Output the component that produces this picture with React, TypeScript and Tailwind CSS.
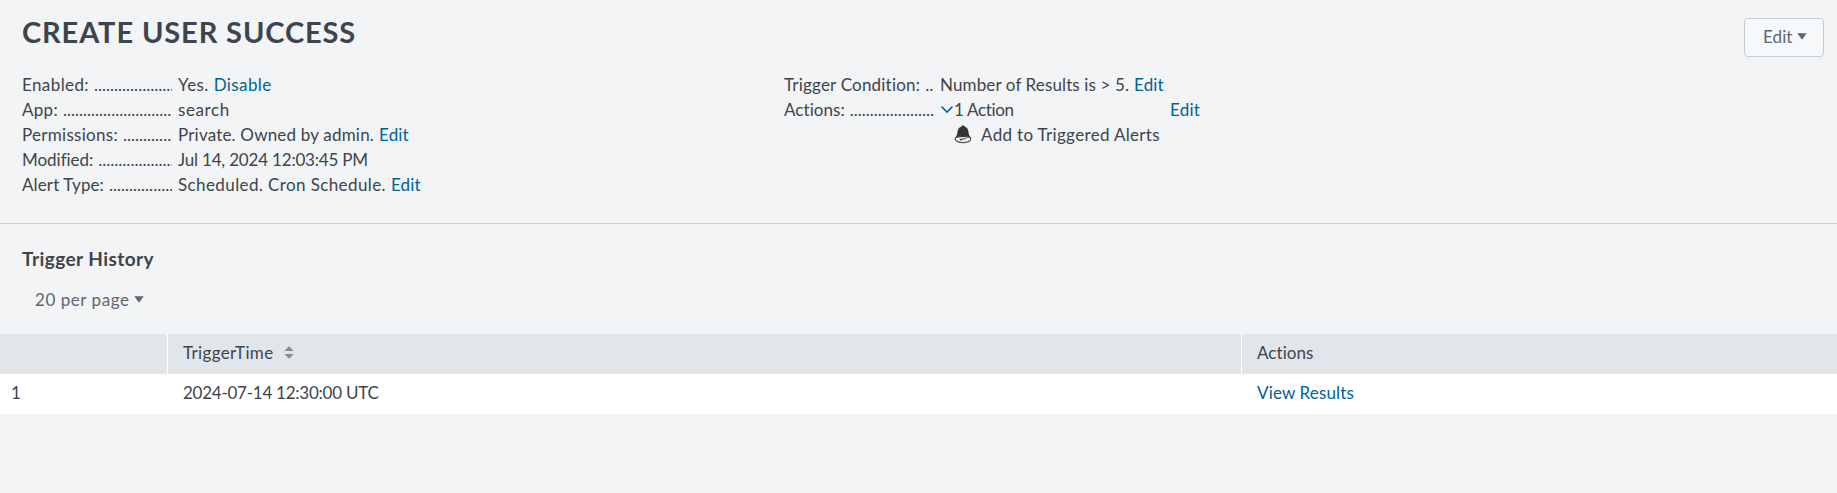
import type { ReactNode } from "react";

function Row({ label, dots, track, children }: { label: string; dots: number; track: string; children: ReactNode }) {
  return (
    <div className="flex h-[25px] whitespace-nowrap leading-[25px]">
      <dt className="mr-[6px] flex w-[150px] shrink-0 gap-[5px] overflow-hidden">
        <span className={track}>{label}</span>
        <span>{".".repeat(dots)}</span>
      </dt>
      <dd className="flex gap-[5px]">{children}</dd>
    </div>
  );
}

function Link({ children, className = "tracking-[0.15px]" }: { children: ReactNode; className?: string }) {
  return (
    <a href="#" className={`text-[#006297] ${className}`}>
      {children}
    </a>
  );
}

function Caret() {
  return (
    <svg width="10" height="7" viewBox="0 0 10 7" className="shrink-0 fill-[#5c6773]">
      <path d="M.3 .2h9.400L5.600 6q-.6.7-1.200 0z" />
    </svg>
  );
}

function Bell() {
  return (
    <svg width="18" height="19" viewBox="0 0 18 19" className="shrink-0">
      <ellipse cx="9" cy="14" rx="7.800" ry="3.700" fill="#f2f4f5" stroke="#555" strokeWidth="1.200" />
      <path d="M9 .5c1.100 0 1.700.5 1.800 1.300 2.500.8 3.500 2.600 3.700 5.200.1 2.400.9 4 2.300 5.600-2-1.300-4.700-1.900-7.800-1.900s-5.800.6-7.800 1.900C2.600 11 3.400 9.400 3.500 7c.2-2.600 1.200-4.400 3.700-5.200C7.300 1 7.900.5 9 .5z" fill="#333" />
      <path d="M2 12.300q7-3 14 0L14 12.800q-5-1.500-10 0z" fill="#333" />
      <path d="M5 14.300q3.500-1.600 8-.8-1 1.200-4.200 1.100-.8 1.300-2.300.9-1.100-.3-.6-1.200z" fill="#555" />
    </svg>
  );
}

export default function App() {
  return (
    <main className="h-[493px] w-full bg-[#f2f4f5] font-['Lato',sans-serif] text-[17px] text-[#3c444d]">
      <header className="flex h-[72px] items-start justify-between pl-[22px] pr-[13px]">
        <h1 className="pt-[14px] text-[29px] font-bold leading-9 tracking-[0.88px]">CREATE USER SUCCESS</h1>
        <button className="mt-[18px] flex h-[39px] w-20 items-center gap-1 rounded-[4px] border border-[#c3cbd4] bg-[#f7f8fa] pb-[2px] pl-[18px] text-[#5c6773]">
          <span className="tracking-[0.1px]">Edit</span>
          <Caret />
        </button>
      </header>

      <section className="flex h-[151px] pl-[22px]">
        <dl className="w-[762px]">
          <Row label="Enabled:" dots={20} track="tracking-[0.4px]">
            <span className="tracking-[0.4px]">Yes.</span>
            <Link className="tracking-[0.4px]">Disable</Link>
          </Row>
          <Row label="App:" dots={27} track="tracking-[0.3px]">
            <span className="tracking-[0.6px]">search</span>
          </Row>
          <Row label="Permissions:" dots={12} track="tracking-[0.29px]">
            <span className="tracking-[0.19px]">Private. Owned by admin.</span>
            <Link>Edit</Link>
          </Row>
          <Row label="Modified:" dots={19} track="tracking-[-0.03px]">
            <span className="tracking-[-0.19px]">Jul 14, 2024 12:03:45 PM</span>
          </Row>
          <Row label="Alert Type:" dots={16} track="tracking-[0.12px]">
            <span className="tracking-[0.4px]">Scheduled. Cron Schedule.</span>
            <Link>Edit</Link>
          </Row>
        </dl>
        <dl>
          <Row label="Trigger Condition:" dots={2} track="tracking-[0.2px]">
            <span className="tracking-[0.12px]">Number of Results is &gt; 5.</span>
            <Link>Edit</Link>
          </Row>
          <Row label="Actions:" dots={21} track="tracking-[0.05px]">
            <div className="flex w-[225px] items-center">
              <svg width="14" height="9" viewBox="0 0 14 9" className="fill-none stroke-[#006297] stroke-[1.600]">
                <path d="M1.500 1.500 7 7l5.500-5.500" />
              </svg>
              <span className="tracking-[-0.33px]">1 Action</span>
            </div>
            <Link className="tracking-[0.2px]">Edit</Link>
          </Row>
          <div className="flex h-[25px] items-center gap-[9px] pl-[170px] leading-[25px]">
            <Bell />
            <span className="tracking-[0.33px]">Add to Triggered Alerts</span>
          </div>
        </dl>
      </section>

      <section className="border-t border-[#c3cbd4]">
        <h2 className="pl-[22px] pt-[22px] text-[19px] font-bold leading-[25px] tracking-[0.44px]">Trigger History</h2>
        <div className="mt-4 flex h-[25px] items-center gap-[5px] pl-[35px] text-[#5c6773]">
          <span className="tracking-[0.55px]">20 per page</span>
          <Caret />
        </div>
        <table className="mt-[22px] w-full table-fixed border-collapse text-left">
          <colgroup>
            <col className="w-[168px]" />
            <col className="w-[1074px]" />
            <col />
          </colgroup>
          <thead>
            <tr className="h-10 bg-[#e1e6eb]">
              <th className="p-0 shadow-[inset_-1px_0_#fff]" />
              <th className="p-0 pb-[3px] pl-[15px] font-normal shadow-[inset_-1px_0_#fff]">
                <div className="flex items-center gap-[10px]">
                  <span className="tracking-[0.35px]">TriggerTime</span>
                  <svg width="10" height="13" viewBox="0 0 10 13" className="fill-[#818d99]">
                    <path d="M5 .3 9.700 5H.3zM5 12.700.3 8h9.400z" />
                  </svg>
                </div>
              </th>
              <th className="p-0 pb-[3px] pl-[15px] font-normal tracking-[0.05px]">Actions</th>
            </tr>
          </thead>
          <tbody>
            <tr className="h-10 bg-white">
              <td className="p-0 pb-[3px] pl-[11px]">1</td>
              <td className="p-0 pb-[3px] pl-[15px] tracking-[-0.25px]">2024-07-14 12:30:00 UTC</td>
              <td className="p-0 pb-[3px] pl-[15px]">
                <Link className="tracking-[0.15px]">View Results</Link>
              </td>
            </tr>
          </tbody>
        </table>
      </section>
    </main>
  );
}
